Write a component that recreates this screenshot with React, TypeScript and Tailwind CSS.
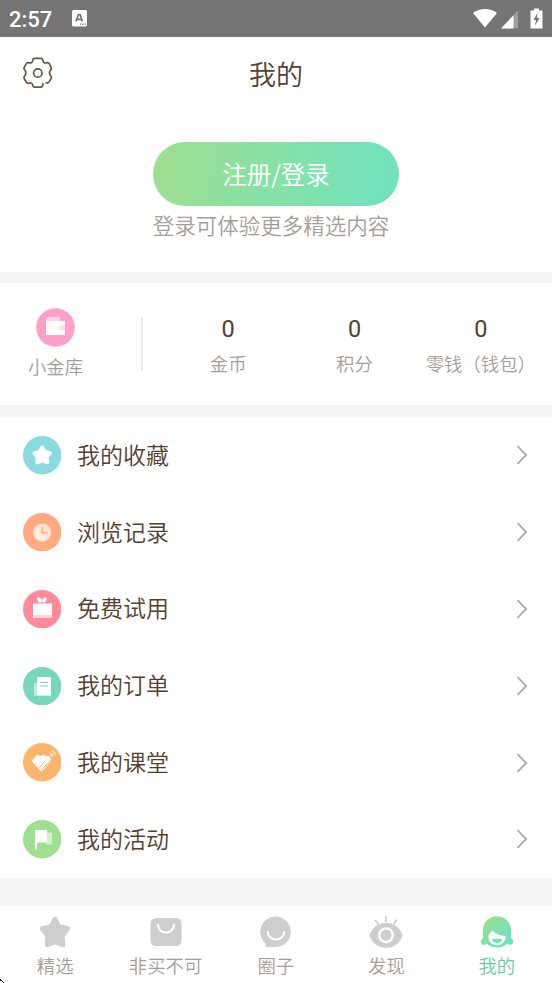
import type { ReactNode } from 'react';

interface MenuItem {
  label: string;
  icon: ReactNode;
}

// 38x38 round icons, the glyphs are drawn in a 0..38 box
const menuItems: MenuItem[] = [
  {
    label: '我的收藏',
    icon: (
      <>
        <circle cx="19.2" cy="19.2" r="19.2" fill="#8adbe0" />
        <path
          d="M19.2 11 L21.8 15.6 L27.2 17 L23.9 21.2 L24.4 26.6 L19.2 25 L14 26.6 L14.5 21.2 L11.2 17 L16.6 15.6 Z"
          fill="#fff"
          stroke="#fff"
          strokeWidth="3.4"
          strokeLinejoin="round"
        />
      </>
    ),
  },
  {
    label: '浏览记录',
    icon: (
      <>
        <defs>
          <linearGradient id="clock" x1="1" y1="0" x2="0" y2="1">
            <stop offset="0" stopColor="#ffdccb" />
            <stop offset="1" stopColor="#fff4ee" />
          </linearGradient>
        </defs>
        <circle cx="19.2" cy="19.2" r="19.2" fill="#ffaa80" />
        <circle cx="19.2" cy="19.4" r="9" fill="url(#clock)" />
        <path d="M19 13.8 V19.8 H24.4" fill="none" stroke="#ffaa80" strokeWidth="1.4" />
      </>
    ),
  },
  {
    label: '免费试用',
    icon: (
      <>
        <circle cx="19.2" cy="19.2" r="19.2" fill="#ff8a9b" />
        <path d="M10 13.5 H29 V25 H10 Z" fill="#fff" />
        <path d="M10 25 H29 V28 H10 Z" fill="#ffd3da" />
        <ellipse cx="16.5" cy="10" rx="2" ry="2.9" transform="rotate(-35 16.5 10)" fill="#fff" />
        <ellipse cx="21.4" cy="10" rx="2" ry="2.9" transform="rotate(35 21.4 10)" fill="#fff" />
      </>
    ),
  },
  {
    label: '我的订单',
    icon: (
      <>
        <circle cx="19.2" cy="19.2" r="19.2" fill="#77d6bc" />
        <path d="M11 16 H14 V28.6 H11 Z" fill="#bdebde" />
        <path d="M14 10 H28 V28.6 H14 Z" fill="#fff" />
        <path d="M17 15.5 H25 M17 19 H25" stroke="#77d6bc" strokeWidth="1.2" />
      </>
    ),
  },
  {
    label: '我的课堂',
    icon: (
      <>
        <circle cx="19.2" cy="19.2" r="19.2" fill="#f9b66c" />
        <path d="M8.6 18 L14.4 11.6 L17.2 13 L20.6 11.6 L22.6 13 L25.4 13 L28 15.4 L27.6 18.5 L18.6 28.8 Z" fill="#fff" />
        <path d="M16.2 25 L22.4 17.6 M18.2 27 L27.6 17.4" stroke="#f9b66c" strokeWidth="1" />
        <path d="M27.6 10.4 A3.6 3.6 0 0 1 30.2 13 M28.6 7.8 A6 6 0 0 1 32.6 12" fill="none" stroke="#fff" strokeOpacity=".75" strokeWidth="1.2" />
        <circle cx="28" cy="12.4" r=".9" fill="#fff" />
      </>
    ),
  },
  {
    label: '我的活动',
    icon: (
      <>
        <circle cx="19.2" cy="19.2" r="19.2" fill="#a0df90" />
        <path d="M23 12.5 H29 V24.5 H23 Z" fill="#d3f0cb" />
        <path d="M12 10 H24 V22.6 H14 V29.5 H12 Z" fill="#fff" />
      </>
    ),
  },
];

const stats = [
  { label: '金币', value: 0 },
  { label: '积分', value: 0 },
  { label: '零钱（钱包）', value: 0 },
];

const tabs: MenuItem[] = [
  {
    label: '精选',
    icon: (
      <path
        d="M18 5.3 L21.8 12.6 L30.7 14.8 L25.2 21.6 L25.8 30.6 L18 28 L10.2 30.6 L10.8 21.6 L5.3 14.8 L14.2 12.6 Z"
        fill="#cecece"
        stroke="#cecece"
        strokeWidth="5"
        strokeLinejoin="round"
      />
    ),
  },
  {
    label: '非买不可',
    icon: (
      <>
        <rect x="2.5" y="4" width="31" height="28" rx="5.5" fill="#cecece" />
        <path d="M10 10.5 C10 21 26 21 26 10.5" fill="none" stroke="#fff" strokeWidth="2" strokeLinecap="round" />
      </>
    ),
  },
  {
    label: '圈子',
    icon: (
      <>
        <path d="M7.5 33 V29.5 A15.3 15.3 0 1 1 18 33.2 Z" fill="#cecece" />
        <path d="M9.8 18 C10.5 28 25.5 28 26.2 18" fill="none" stroke="#fff" strokeWidth="2" strokeLinecap="round" />
      </>
    ),
  },
  {
    label: '发现',
    icon: (
      <>
        <path d="M1.5 21 C7 4.5 29 4.5 34.5 21 C31 38 5 38 1.5 21 Z" fill="#cecece" />
        <path d="M18 2 V8 M6.8 6 L10.5 10.4 M29 5.5 L25.6 10.4" stroke="#cecece" strokeWidth="1.8" />
        <circle cx="18" cy="21.2" r="6.8" fill="none" stroke="#fff" strokeWidth="2.4" />
      </>
    ),
  },
  {
    label: '我的',
    icon: (
      <>
        <defs>
          <linearGradient id="hair" x1="0" y1="0" x2="1" y2="1">
            <stop offset=".1" stopColor="#9fdf8e" />
            <stop offset=".75" stopColor="#6fe2bd" />
          </linearGradient>
        </defs>
        <path
          d="M3.8 17 C3.8 -2.8 32.2 -2.8 32.2 17 V24.4 C35.4 25.6 34.6 30.8 31 30.8 C29.6 30.8 28.6 30.2 28 29.4 C23.5 34.8 12.5 34.8 8 29.4 C7.4 30.2 6.4 30.8 5 30.8 C1.4 30.8 .6 25.6 3.8 24.4 Z"
          fill="url(#hair)"
        />
        <path d="M13.6 16.4 C16.5 20 21 21.5 26.6 22 C26.4 34.4 9.6 34.4 9.4 22.5 C9.6 20 11.5 18 13.6 16.4 Z" fill="#fff" />
        <path d="M13 25 H23 C22.5 30.5 13.5 30.5 13 25 Z" fill="#6fe2bd" />
      </>
    ),
  },
];

function StatusBar() {
  return (
    <header className="flex h-[37px] items-center justify-between bg-[#757575] pl-[9px] pr-[7px] text-white">
      <div className="flex items-center gap-5">
        <span className="w-[43px] whitespace-nowrap pt-[2px] font-[Roboto] text-[22px] font-medium leading-none">2:57</span>
        <svg width="15" height="17" viewBox="0 0 15 17">
          <rect width="15" height="16.5" rx="1.4" fill="#fff" />
          <path d="M4 11.5 L6.4 4.5 H8 L10.4 11.5 M5 9.3 H9.4" fill="none" stroke="#757575" strokeWidth="1.7" />
          <path d="M8 14.2 H14" stroke="#757575" strokeWidth="1.3" strokeDasharray="1.3 1" />
        </svg>
      </div>
      <svg width="72" height="22" viewBox="0 0 72 22">
        <path d="M0 5 C7 -0.2 17 -0.2 24 5 L12 19.5 Z" fill="#fff" />
        <path d="M28 20.5 L45 2.5 V20.5 Z" fill="#9f9f9f" />
        <path d="M28 20.5 L40.5 7.2 V20.5 Z" fill="#fff" />
        <path d="M57.5 2.5 H61 V0.5 H66 V2.5 H69.5 V20.5 H57.5 Z" fill="#fff" />
        <path d="M64.5 5 L60.5 12 H63 L62 17.5 L66.6 10 H64 Z" fill="#757575" />
      </svg>
    </header>
  );
}

function Hero() {
  return (
    <section className="h-[235px] bg-white">
      <div className="grid h-[73px] grid-cols-[1fr_auto_1fr] items-center px-[22px]">
        <svg className="mb-px" width="32" height="32" viewBox="0 0 32 32" fill="none" stroke="#6b5443" strokeWidth="1.7" strokeLinecap="round" strokeLinejoin="round">
          <path d="M24.2 25.8 Q26.2 26.4 27.2 24.6 L29.2 21.4 Q29.8 20.2 28.8 19.2 Q26.2 16 28.8 12.8 Q29.8 11.8 29.2 10.6 L27.4 6.8 Q26.6 5.4 25 5.6 Q21.4 7 20.9 3.4 Q20.6 1.4 19 1.4 H12.6 Q11 1.4 10.8 3.4 Q10.2 7 6.6 5.6 Q5 5.2 4.2 6.8 L2.2 10.4 Q1.4 11.8 2.6 12.8 Q5.2 16 2.6 19.2 Q1.4 20.2 2.2 21.6 L4.2 25 Q5 26.6 6.6 26.2 Q10.2 25.2 10.8 28.4 Q11 30.2 12.6 30.2 H18.8 Q20.4 30.2 20.6 28.4 L21 26.6" />
          <circle cx="15.8" cy="16" r="4.2" />
        </svg>
        <h1 className="pb-px text-[27px] leading-none text-[#54402f]">我的</h1>
      </div>
      <div className="flex flex-col items-center pt-[32px]">
        <button className="h-16 w-[246px] rounded-full bg-[linear-gradient(100deg,#9fde8f,#6fe2c0)] pt-px text-[24.5px] leading-none text-white">
          注册/登录
        </button>
        <p className="mt-[7px] mr-[10px] text-[21.5px] leading-6 text-[#a69d98]">登录可体验更多精选内容</p>
      </div>
    </section>
  );
}

function Wallet() {
  return (
    <section className="mt-[11px] flex h-[122px] bg-white">
      <div className="flex w-[111px] flex-col items-center pt-[25px]">
        <svg width="39" height="39" viewBox="0 0 39 39">
          <circle cx="19.5" cy="19.5" r="19.3" fill="#ffa0c8" />
          <path d="M10 9 H24 V14 H10 Z" fill="#ffd3e6" />
          <path d="M10 13 H29 V27 H10 Z" fill="#fff" />
          <path d="M29 17 H25.8 A2.5 2.5 0 0 0 25.8 22 H29 Z" fill="#ffe2d4" />
        </svg>
        <span className="mt-[7px] text-[18.4px] leading-6 text-[#a69d98]">小金库</span>
      </div>
      <div className="ml-[30px] mt-[34px] h-[54px] w-[2px] bg-[#ececec]" />
      <div className="ml-[22px] grid grow grid-cols-3 pr-[8px] pt-[34px] text-center">
        {stats.map((s) => (
          <div key={s.label}>
            <div className="font-[Roboto] text-[23.5px] font-normal leading-6 text-[#54402f]">{s.value}</div>
            <div className="mt-[10px] whitespace-nowrap text-[18.4px] leading-6 text-[#a69d98]">{s.label}</div>
          </div>
        ))}
      </div>
    </section>
  );
}

function Menu() {
  return (
    <ul className="mt-[12px] bg-white">
      {menuItems.map((item) => (
        <li key={item.label} className="flex h-[76.8px] items-center pl-[23px] pr-[24px]">
          <svg width="38.4" height="38.4" viewBox="0 0 38.4 38.4">
            {item.icon}
          </svg>
          <span className="ml-[15.5px] grow pb-[2px] text-[23px] leading-none text-[#54402f]">{item.label}</span>
          <svg width="12" height="20" viewBox="0 0 12 20" fill="none" stroke="#ababab" strokeWidth="1.8">
            <path d="M1.5 1.2 L10.2 10 L1.5 18.8" />
          </svg>
        </li>
      ))}
    </ul>
  );
}

function TabBar() {
  return (
    <nav className="mt-[28.2px] grid h-[77px] grid-cols-5 bg-white pt-[8px]">
      {tabs.map((tab, i) => (
        <div key={tab.label} className="flex flex-col items-center">
          <svg width="36" height="36" viewBox="0 0 36 36">
            {tab.icon}
          </svg>
          <span className={`mt-[3px] text-[18.4px] leading-6 ${i === 4 ? 'text-[#65cba8]' : 'text-[#a69d98]'}`}>
            {tab.label}
          </span>
        </div>
      ))}
    </nav>
  );
}

export default function App() {
  return (
    <div className="relative h-[983px] w-[552px] overflow-hidden bg-[#f4f4f4] font-['Noto_Sans_CJK_SC',sans-serif] font-[350]">
      <StatusBar />
      <Hero />
      <Wallet />
      <Menu />
      <TabBar />
      {/* tip of the resize cursor in the corner */}
      <svg className="absolute bottom-0 left-0" width="5" height="5" viewBox="0 0 5 5" shapeRendering="crispEdges">
        <path d="M0 1 H1 V2 H2 V3 H0 Z M2 3 H3 V4 H4 V5 H3 V4 H2 Z" fill="#111" />
      </svg>
    </div>
  );
}
